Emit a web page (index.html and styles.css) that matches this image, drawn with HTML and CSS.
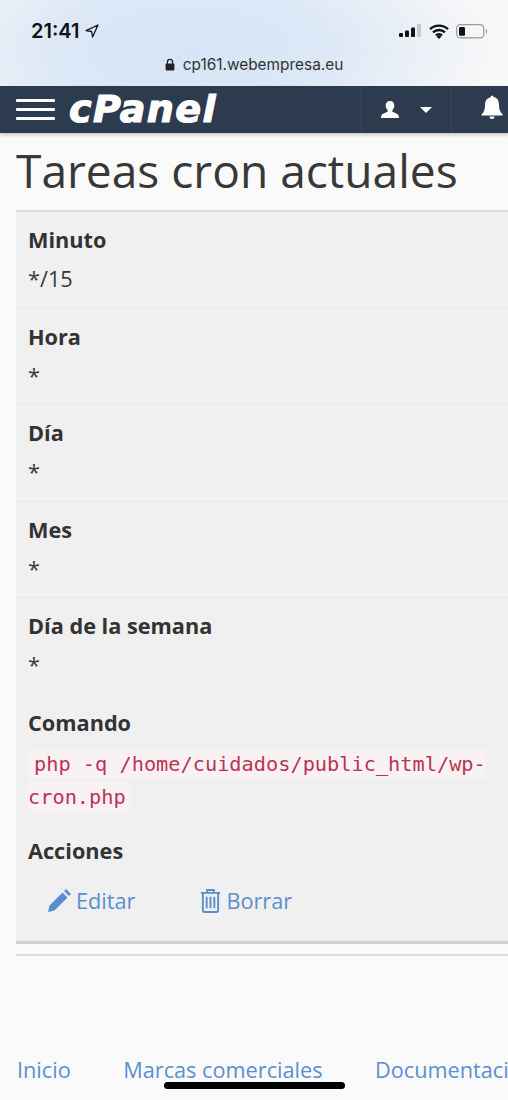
FILE: index.html

```html
<!DOCTYPE html>
<html lang="es">
<head>
  <meta charset="UTF-8" />
  <meta name="viewport" content="width=device-width, initial-scale=1.0" />
  <title>Tareas cron actuales</title>
  <link rel="stylesheet" href="styles.css">
</head>
<body>
  <div class="browser-top">
    <div class="status-bar">
      <div class="clock">
        <span>21:41</span>
        <svg class="arrow" viewBox="0 0 14 14" width="14" height="14"><path d="M13 1 1 6.600l5.600.9L7.600 13z" fill="none" stroke="#111" stroke-width="1.300" stroke-linejoin="round"/></svg>
      </div>
      <div class="status-icons">
        <svg viewBox="0 0 23 14" width="23" height="14"><rect x="0" y="9" width="4" height="4" rx="1" fill="#111"/><rect x="6" y="6.500" width="4" height="6.500" rx="1" fill="#111"/><rect x="12" y="3.500" width="4" height="9.500" rx="1" fill="#111"/><rect x="18" y="0" width="4" height="13" rx="1" fill="#c9c9c9"/></svg>
        <svg viewBox="0 0 20 15" width="20" height="15"><path d="M1 5.200a13 13 0 0 1 18 0M4 8.400a8.600 8.600 0 0 1 12 0M7 11.400a4.200 4.200 0 0 1 6 0" fill="none" stroke="#111" stroke-width="2.400"/><path d="M10 15 7.600 12.400a3.400 3.400 0 0 1 4.800 0z" fill="#111"/></svg>
        <svg viewBox="0 0 32 15" width="32" height="15"><rect x=".7" y=".7" width="27" height="13.200" rx="3.600" fill="none" stroke="#9b9b9b" stroke-width="1.200"/><rect x="3" y="3" width="6" height="8.800" rx="1.400" fill="#111"/><path d="M29.800 5v4.600c1-.3 1.500-1.200 1.500-2.300s-.5-2-1.500-2.300z" fill="#a5a5a5"/></svg>
      </div>
    </div>
    <div class="url-bar">
      <svg viewBox="0 0 10 13" width="10" height="13"><path d="M2.400 6V4a2.600 2.600 0 0 1 5.200 0v2" fill="none" stroke="#222" stroke-width="1.300"/><rect x=".6" y="5.400" width="8.800" height="7" rx="1.200" fill="#222"/></svg>
      <span>cp161.webempresa.eu</span>
    </div>
  </div>

  <nav class="topnav">
    <div class="burger"><i></i><i></i><i></i></div>
    <span class="logo">cPanel</span>
    <div class="nav-item nav-user">
      <svg viewBox="0 0 20 20" width="20" height="20"><path d="M10 1c2.900 0 4.300 2 4.300 4.600 0 2-.9 3.700-2 4.700v1.500c2 1 6.400 1.700 6.700 5.200v1H1v-1c.3-3.500 4.700-4.200 6.700-5.200v-1.500c-1.100-1-2-2.700-2-4.700C5.700 3 7.100 1 10 1z" fill="#fff"/></svg>
      <span class="caret"></span>
    </div>
    <div class="nav-item nav-bell">
      <svg viewBox="0 0 24 26" width="24" height="26"><path d="M12 1.500c1 0 1.600.7 1.600 1.600 3.900.7 5.400 3.800 5.400 7.400 0 5 1.400 7.500 3.500 9.500v1.500h-21V20.500c2.100-2 3.500-4.500 3.500-9.500 0-3.600 1.500-6.700 5.400-7.400 0-.9.600-1.600 1.600-1.600zM9.500 22.500a2.500 2.500 0 0 0 5 0z" fill="#fff"/></svg>
    </div>
  </nav>

  <main class="content">
    <h1 class="page-title">Tareas cron actuales</h1>
    <div class="cron-card">
      <div class="cron-row">
        <div class="cron-label">Minuto</div>
        <div class="cron-value">*/15</div>
      </div>
      <div class="cron-row">
        <div class="cron-label">Hora</div>
        <div class="cron-value">*</div>
      </div>
      <div class="cron-row">
        <div class="cron-label">Día</div>
        <div class="cron-value">*</div>
      </div>
      <div class="cron-row">
        <div class="cron-label">Mes</div>
        <div class="cron-value">*</div>
      </div>
      <div class="cron-row">
        <div class="cron-label">Día de la semana</div>
        <div class="cron-value">*</div>
      </div>
      <div class="cron-row cron-row-command">
        <div class="cron-label">Comando</div>
        <div class="cron-value"><code>php -q /home/cuidados/public_html/wp-cron.php</code></div>
      </div>
      <div class="cron-row cron-row-actions">
        <div class="cron-label">Acciones</div>
        <div class="actions">
          <a class="action" href="#">
            <svg viewBox="0 0 24 24" width="24" height="24"><path d="M1 23l1.500-6.500L15.500 3.500l5 5L7.500 21.500zM17 2l2-2 5 5-2 2z" fill="#5a8fcf"/></svg>
            Editar
          </a>
          <a class="action" href="#">
            <svg viewBox="0 0 22 26" width="21" height="25"><path d="M1 5h20M7.500 5V2h7v3M3 5v18.500a1.500 1.500 0 0 0 1.500 1.500h13a1.500 1.500 0 0 0 1.500-1.500V5M7 9v12M11 9v12M15 9v12" fill="none" stroke="#5a8fcf" stroke-width="2"/></svg>
            Borrar
          </a>
        </div>
      </div>
    </div>
    <hr class="page-rule">
  </main>

  <footer class="page-footer">
    <a href="#">Inicio</a>
    <a href="#">Marcas comerciales</a>
    <a href="#">Documentación</a>
  </footer>
  <div class="home-indicator"></div>
</body>
</html>
```

FILE: styles.css

```css
* { box-sizing: border-box; }
html, body {
  margin: 0;
  padding: 0;
  height: 1100px;
  overflow: hidden;
}
body {
  position: relative;
  background: #fafafa;
  font-family: "Open Sans", sans-serif;
  color: #333;
}
a {
  color: #5a8fcf;
  text-decoration: none;
}

.browser-top {
  height: 86px;
  padding-top: 19px;
  background: radial-gradient(ellipse 300px 130px at 190px 50px, #d5e5f6 0%, #dce8f6 45%, #ecf1f7 78%, #f7f7f8 100%);
}
.status-bar {
  display: flex;
  justify-content: space-between;
  align-items: center;
  height: 24px;
  padding: 0 20px 0 31px;
}
.clock {
  display: flex;
  align-items: center;
  gap: 6px;
  font-family: Inter, sans-serif;
  font-size: 20px;
  font-weight: 600;
  color: #111;
}
.status-icons {
  display: flex;
  align-items: center;
  gap: 7px;
}
.url-bar {
  display: flex;
  justify-content: center;
  align-items: center;
  gap: 8px;
  margin-top: 12px;
  font-family: Inter, sans-serif;
  font-size: 15.4px;
  color: #333;
}

.topnav {
  display: flex;
  align-items: center;
  height: 47px;
  padding-left: 16px;
  background: #2d3b4e;
  box-shadow: 0 2px 3px rgba(0,0,0,0.2);
  overflow: hidden;
}
.burger {
  display: flex;
  flex-direction: column;
  gap: 6px;
  width: 39px;
}
.burger i {
  display: block;
  height: 3px;
  background: #fff;
  border-radius: 1px;
}
.logo {
  margin-left: 14px;
  font-family: "DejaVu Sans", sans-serif;
  font-size: 38px;
  line-height: 47px;
  font-weight: 700;
  font-style: italic;
  letter-spacing: 1.4px;
  color: #fff;
  -webkit-text-stroke: 1.2px #fff;
}
.nav-item {
  display: flex;
  align-items: center;
  height: 47px;
  border-left: 1px solid #3a4859;
}
.nav-user {
  gap: 20px;
  width: 90px;
  margin-left: auto;
  padding-left: 18px;
}
.nav-bell {
  flex: none;
  width: 57px;
  padding: 0 0 5px 28px;
}
.caret {
  width: 0;
  height: 0;
  border-left: 6px solid transparent;
  border-right: 6px solid transparent;
  border-top: 6px solid #fff;
}

.content {
  padding-left: 16px;
}
.page-title {
  margin: 0;
  padding: 11px 0 13px;
  font-size: 46.1px;
  font-weight: 400;
  line-height: 53px;
  color: #383838;
}
.cron-card {
  background: #f0f0f0;
  border-top: 2px solid #d9d9d9;
  border-bottom: 3px solid #cfcfcf;
}
.cron-row {
  height: 96.6px;
  padding: 14px 0 0 12px;
  border-bottom: 1px solid #eaeaea;
}
.cron-row-command {
  height: 127.6px;
}
.cron-row-actions {
  height: 118px;
  border-bottom: 0;
}
.cron-label {
  font-size: 21.7px;
  font-weight: 700;
  line-height: 28px;
  color: #333;
}
.cron-value {
  margin-top: 11px;
  font-size: 21.7px;
  line-height: 28px;
  color: #3a3a3a;
}
.cron-row-command .cron-value {
  margin-top: 10px;
  padding-right: 20px;
  line-height: 31px;
}
code {
  padding: 3px 5px 3px 6px;
  font-family: "DejaVu Sans Mono", monospace;
  font-size: 20.3px;
  color: #bd3353;
  background: #f9f2f4;
  border-radius: 4px;
}
.actions {
  display: flex;
  gap: 65px;
  margin-top: 22px;
  padding-left: 19px;
}
.action {
  display: flex;
  align-items: center;
  gap: 5px;
  font-size: 21.7px;
  line-height: 28px;
}
.page-rule {
  height: 2px;
  margin: 10px 0 0;
  border: 0;
  background: #dcdcdc;
}

.page-footer {
  display: flex;
  gap: 52.5px;
  margin-top: 100px;
  padding-left: 17px;
  font-size: 21.7px;
  line-height: 28px;
  white-space: nowrap;
  overflow: hidden;
}
.home-indicator {
  position: absolute;
  left: 164px;
  bottom: 11px;
  width: 181px;
  height: 7px;
  background: #000;
  border-radius: 3.5px;
}
```
